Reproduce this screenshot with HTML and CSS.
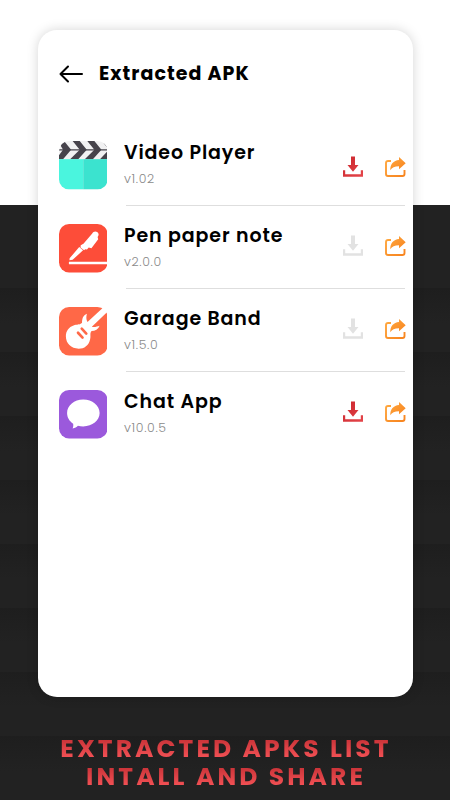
FILE: index.html
```html
<!DOCTYPE html>
<html lang="en">
<head>
    <meta charset="UTF-8">
    <meta name="viewport" content="width=device-width, initial-scale=1.0">
    <title>Extracted APK</title>
    <link rel="stylesheet" href="styles.css">
</head>
<body>
    <svg class="defs" width="0" height="0">
        <defs>
            <linearGradient id="red" x1="0" y1="0" x2="1" y2="1">
                <stop offset="0" stop-color="#c9242b"/>
                <stop offset="1" stop-color="#e5464b"/>
            </linearGradient>
            <linearGradient id="orange" x1="0" y1="0" x2="1" y2="1">
                <stop offset="0" stop-color="#ffa63d"/>
                <stop offset="1" stop-color="#f7841f"/>
            </linearGradient>
            <symbol id="download" viewBox="0 0 20 21">
                <path d="M8 0.500h4v8.500h3.500L10 15.700 4.500 9H8zM0 14.200h2.200v4.100h15.600v-4.100H20v6.600H0z"/>
            </symbol>
            <symbol id="share" viewBox="0 0 21 20">
                <path d="M6 4H3Q1 4 1 6v11q0 2 2 2h14.500q2 0 2-2v-4" fill="none" stroke="url(#orange)" stroke-width="1.900"/>
                <path d="M14 0l6.700 6.300L14 12.300V9.300C9.500 9.300 7 10.500 5.300 13.300 5 7.500 8.500 3.400 14 3z" fill="url(#orange)"/>
            </symbol>
        </defs>
    </svg>

    <main class="card">
        <header class="header">
            <svg class="back" viewBox="0 0 24 18"><path d="M9 1.500L1.500 9 9 16.500M1.500 9h21.500"/></svg>
            <h1>Extracted APK</h1>
        </header>

        <ul class="list">
            <li class="row">
                <svg class="app-icon" viewBox="0 0 48 48">
                    <clipPath id="round"><rect width="48" height="48" rx="10"/></clipPath>
                    <g clip-path="url(#round)">
                        <rect width="48" height="48" fill="#f1f1f2"/>
                        <path d="M-1 0h6l7 8.700L4 18h-7l7-9.300zM13.500 0h7l7 8.700-8.500 9.300h-8l9.500-9.300zM28 0h7l7 8.700-8.500 9.300h-8l9.500-9.300zM42.500 0h8v18h-10l9-9.300z" fill="#46434b"/>
                        <path d="M0 8.700h48" stroke="#46434b" stroke-width="1.200"/>
                        <rect y="18" width="24" height="30" fill="#4af5de"/>
                        <rect x="24" y="18" width="24" height="30" fill="#3be3cf"/>
                    </g>
                </svg>
                <div class="info">
                    <h2 class="name">Video Player</h2>
                    <p class="version">v1.02</p>
                </div>
                <div class="actions first">
                    <svg class="download" viewBox="0 0 20 21"><use href="#download"/></svg>
                    <svg class="share" viewBox="0 0 21 20"><use href="#share"/></svg>
                </div>
            </li>
            <li class="row">
                <svg class="app-icon" viewBox="0 0 48 48">
                    <rect width="48" height="48" rx="10" fill="#fd4d39"/>
                    <path d="M9.800 37.300H48v2.600H9.800z" fill="#fff"/>
                    <path d="M10.500 34l9.500-11.300 3.800 3.300L13.500 35.500l-3.200.3zM21.500 21l2.700-1.500 8.500-9.800c1.200-2.200 3.200-3 5-1.800s2 3.100.5 5l.6 2.200-6.700 8.800-2.700-.6-1.700 2-1.700-.3-1.200 1-3.500-2.800z" fill="#fff"/>
                </svg>
                <div class="info">
                    <h2 class="name">Pen paper note</h2>
                    <p class="version">v2.0.0</p>
                </div>
                <div class="actions">
                    <svg class="download disabled" viewBox="0 0 20 21"><use href="#download"/></svg>
                    <svg class="share" viewBox="0 0 21 20"><use href="#share"/></svg>
                </div>
            </li>
            <li class="row">
                <svg class="app-icon" viewBox="0 0 48 48">
                    <rect width="48" height="48" rx="10" fill="#ff6847"/>
                    <path d="M43.500.8Q46.500 1.500 47.600 5L32.500 19.500c2.700.7 5.300-.3 7.700-1-1.200 3.400-4.500 5.200-8 5.300-2 2.500-.5 5-1.400 8C29.500 38 25 41.200 19.500 41.200 12 41.200 6.800 36 6.800 29c0-5.500 3-9.300 7.600-10.800 3.300-1.200 6 0 8.400-2.600 0-4 1-7.500 4.800-9-.6 2.700-1 5.200.6 8.200z" fill="#fff"/>
                    <path d="M18.800 25.500l4.500 4.800M22.500 21.500l4.500 4.800" stroke="#ff6847" stroke-width="2.600" stroke-linecap="round"/>
                </svg>
                <div class="info">
                    <h2 class="name">Garage Band</h2>
                    <p class="version">v1.5.0</p>
                </div>
                <div class="actions">
                    <svg class="download disabled" viewBox="0 0 20 21"><use href="#download"/></svg>
                    <svg class="share" viewBox="0 0 21 20"><use href="#share"/></svg>
                </div>
            </li>
            <li class="row">
                <svg class="app-icon" viewBox="0 0 48 48">
                    <rect width="48" height="48" rx="10" fill="#9b59dc"/>
                    <path d="M24 9.500c9 0 16.200 5.900 16.200 13.300S33 36 24 36c-2 0-3.800-.2-5.300-.6-1.200 1.400-3 2.300-5.200 2.800.6-1.700.8-3.200.5-4.800-3.700-2.400-6-6.300-6-10.600C8 15.400 15 9.500 24 9.500z" fill="#fff"/>
                </svg>
                <div class="info">
                    <h2 class="name">Chat App</h2>
                    <p class="version">v10.0.5</p>
                </div>
                <div class="actions">
                    <svg class="download" viewBox="0 0 20 21"><use href="#download"/></svg>
                    <svg class="share" viewBox="0 0 21 20"><use href="#share"/></svg>
                </div>
            </li>
        </ul>
    </main>

    <footer class="caption">
        <p>EXTRACTED APKS LIST</p>
        <p>INTALL AND SHARE</p>
    </footer>
</body>
</html>
```

FILE: styles.css
```css
* {
    box-sizing: border-box;
    margin: 0;
    padding: 0;
}

body {
    font-family: Poppins, Inter, sans-serif;
    width: 450px;
    height: 800px;
    overflow: hidden;
    padding-top: 29.5px;
    background:
        linear-gradient(#fff 205.5px, transparent 205.5px),
        repeating-linear-gradient(#1e1e1e 0, #222 35px, #222 64px) 0 288px no-repeat,
        #222;
}

.defs {
    display: block;
}

.card {
    width: 375px;
    height: 667px;
    margin: 0 auto;
    background: #fff;
    border-radius: 19px;
    box-shadow: 0 0 12px rgba(0, 0, 0, 0.17);
}

.header {
    height: 94px;
    padding: 4px 0 10px 21.5px;
    display: flex;
    align-items: center;
    gap: 16px;
}

.back {
    width: 24px;
    height: 18px;
    fill: none;
    stroke: #000;
    stroke-width: 2;
    stroke-linecap: round;
    stroke-linejoin: round;
}

h1 {
    font-size: 19px;
    font-weight: 700;
    letter-spacing: 1.05px;
    white-space: nowrap;
}

.list {
    list-style: none;
    padding: 0 7px 0 21px;
}

.row {
    position: relative;
    height: 83px;
    display: flex;
    align-items: flex-start;
    padding-top: 17.5px;
}

/* divider starts after the icon column */
.row:not(:last-child)::after {
    content: "";
    position: absolute;
    left: 67.5px;
    right: 0.5px;
    bottom: 0.5px;
    height: 1px;
    background: #dedede;
}

.app-icon {
    width: 48.5px;
    height: 48.5px;
}

.info {
    flex: 1;
    margin-left: 17px;
}

.name {
    font-size: 19px;
    font-weight: 600;
    line-height: 24px;
    letter-spacing: 0.9px;
    white-space: nowrap;
}

.version {
    margin-top: 5px;
    font-size: 12.5px;
    line-height: 18px;
    letter-spacing: 0.65px;
    color: #8a8a8a;
    font-weight: 300;
}

.actions {
    display: flex;
    gap: 22px;
    margin-top: 11px;
}

.actions.first {
    margin-top: 15px;
}

.download {
    width: 20px;
    height: 21px;
    fill: url(#red);
}

.download.disabled {
    fill: #e2e2e2;
}

.share {
    width: 21px;
    height: 20px;
    margin-top: 0.5px;
}

.caption {
    padding: 38px 0 0 2px;
    text-align: center;
    font-size: 25px;
    font-weight: 700;
    line-height: 28px;
    letter-spacing: 3.05px;
}

.caption p {
    background: linear-gradient(#c93338 15%, #f55357 85%);
    -webkit-background-clip: text;
    background-clip: text;
    color: transparent;
    white-space: nowrap;
}
```
